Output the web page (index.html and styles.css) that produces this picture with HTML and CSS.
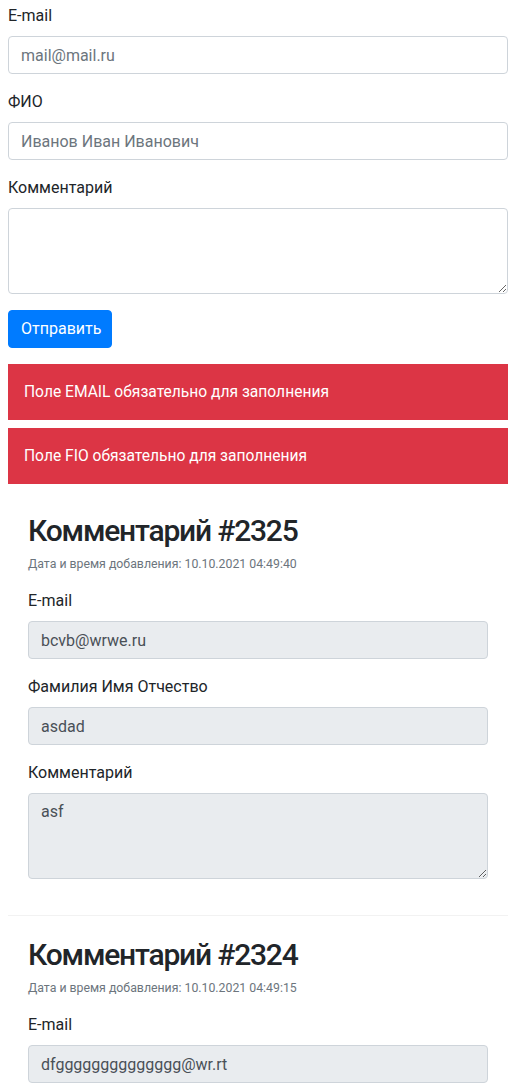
FILE: index.html
```html
<!DOCTYPE html>
<html lang="ru">
<head>
<meta charset="utf-8">
<title>Комментарии</title>
<link rel="stylesheet" href="styles.css">
</head>
<body>
<div class="page">
  <form class="form">
    <div class="form-group">
      <label class="label" for="email">E-mail</label>
      <input class="control" id="email" type="text" placeholder="mail@mail.ru">
    </div>
    <div class="form-group">
      <label class="label" for="fio">ФИО</label>
      <input class="control" id="fio" type="text" placeholder="Иванов Иван Иванович">
    </div>
    <div class="form-group">
      <label class="label" for="comment">Комментарий</label>
      <textarea class="control area" id="comment" rows="3"></textarea>
    </div>
    <button class="btn" type="button">Отправить</button>
  </form>

  <div class="alert">Поле EMAIL обязательно для заполнения</div>
  <div class="alert">Поле FIO обязательно для заполнения</div>

  <div class="card">
    <h2 class="title">Комментарий #2325</h2>
    <div class="date">Дата и время добавления: 10.10.2021 04:49:40</div>
    <div class="form-group">
      <label class="label">E-mail</label>
      <input class="control ro" type="text" value="bcvb@wrwe.ru" readonly>
    </div>
    <div class="form-group">
      <label class="label">Фамилия Имя Отчество</label>
      <input class="control ro" type="text" value="asdad" readonly>
    </div>
    <div class="form-group">
      <label class="label">Комментарий</label>
      <textarea class="control area ro" rows="3" readonly>asf</textarea>
    </div>
  </div>

  <div class="card card-next">
    <h2 class="title">Комментарий #2324</h2>
    <div class="date">Дата и время добавления: 10.10.2021 04:49:15</div>
    <div class="form-group">
      <label class="label">E-mail</label>
      <input class="control ro" type="text" value="dfgggggggggggggg@wr.rt" readonly>
    </div>
  </div>
</div>
</body>
</html>
```

FILE: styles.css
```css
* { box-sizing: border-box; }
html, body {
  margin: 0;
  padding: 0;
  background: #fff;
}
body {
  font-family: Roboto, "Liberation Sans", sans-serif;
  font-size: 16px;
  line-height: 1.5;
  color: #212529;
}
.page {
  padding: 4px 9px 0 8px;
}
.form-group {
  margin-bottom: 16px;
}
.label {
  display: block;
  margin-bottom: 8px;
  line-height: 24px;
}
.control {
  display: block;
  width: 100%;
  height: 38px;
  padding: 6px 12px;
  font-family: inherit;
  font-size: 16px;
  line-height: 24px;
  color: #495057;
  background: #fff;
  border: 1px solid #ced4da;
  border-radius: 4px;
  outline: none;
}
.control::placeholder {
  color: #6c757d;
  opacity: 1;
}
.area {
  height: 86px;
  resize: vertical;
}
.ro {
  background: #e9ecef;
}
.btn {
  display: block;
  width: 104px;
  height: 38px;
  padding: 6px 12px;
  font-family: inherit;
  font-size: 16px;
  line-height: 24px;
  color: #fff;
  background: #007bff;
  border: 1px solid #007bff;
  border-radius: 4px;
  margin-bottom: 16px;
}
.alert {
  background: #dc3545;
  color: #fff;
  padding: 16px;
  font-size: 15.6px;
  line-height: 24px;
  margin-bottom: 8px;
}
.card {
  padding: 20px 20px 4px;
}
.card + .card {
  margin-top: 16px;
  border-top: 1px solid #f2f2f2;
}
.title {
  margin: 0 0 5px;
  font-size: 30px;
  font-weight: 500;
  letter-spacing: -1.2px;
  line-height: 38px;
}
.date {
  font-size: 12.3px;
  line-height: 19px;
  color: #6c757d;
  margin-bottom: 15px;
}
```
